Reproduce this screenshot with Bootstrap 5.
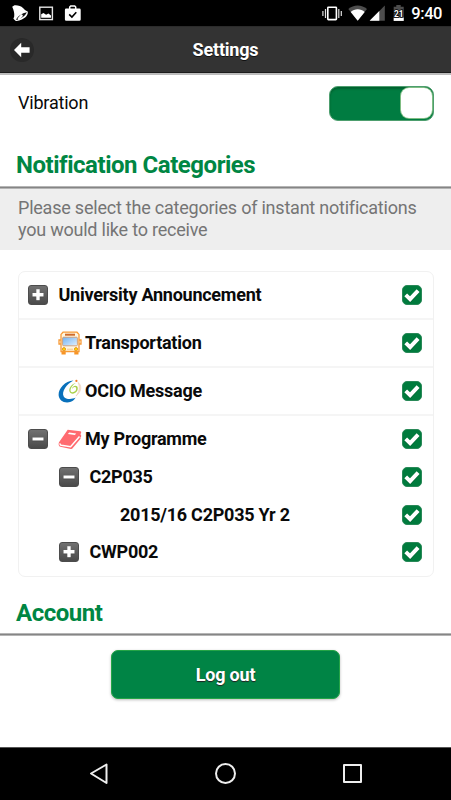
<!DOCTYPE html>
<html lang="en">
<head>
<meta charset="utf-8">
<meta name="viewport" content="width=device-width, initial-scale=1">
<title>Settings</title>
<link rel="stylesheet" href="https://cdn.jsdelivr.net/npm/bootstrap@5.3.0/dist/css/bootstrap.min.css">
<style>
body{font-family:Roboto,sans-serif;width:451px;height:800px;color:#0a0a0a;line-height:1.2}
svg{display:block;flex:none}
.status-bar{height:26px;background:#000;padding:0 9px 0 12px}
.clock{font-size:16.5px;font-weight:500;line-height:26px;margin-left:6px;letter-spacing:-.45px;padding-top:2px}
.app-header{height:49px;background:#333;border-top:1px solid #2b2b2b;border-bottom:2px solid #bcbcbc;box-shadow:inset 0 -1px #1c1c1c;padding-left:10px}
.app-title{font-size:18px;letter-spacing:-.2px;font-weight:700;color:#fff;text-shadow:0 1px 0 #111}
.back-btn{width:24px;height:24px;background:#292929}
.vibration{height:56px;padding:0 17px 0 18px;font-size:18px;letter-spacing:-.2px}
.switch-track{width:105px;height:35px;border-radius:9px;background:#007c41;border:1px solid #4d9e6e;box-shadow:inset 0 2px 2px #00622f;padding:1px}
.knob{width:31px;height:30px;border-radius:8px;background:#fff;box-shadow:0 0 0 1px #7fbd83}
.section-title{font-size:24px;letter-spacing:-.47px;font-weight:700;color:#008643;padding:12px 0 1px 16px;border-bottom:1px solid #b5b5b5;box-shadow:inset 0 -1px #858585,inset 0 -2px #b5b5b5;margin:0}
.section-title span{line-height:44px}
.account-title{padding:14px 0 0 16px}
.hint{height:61px;background:#eee;color:#757575;font-size:18px;letter-spacing:-.22px;line-height:22px;padding:8px 18px}
.categories{margin:21px 17px 0 18px;border:1px solid #f1f1f1;border-radius:7px;font-size:18px;letter-spacing:-.25px;font-weight:700;height:306px}
.main-row{height:48px;padding:0 11px 0 9px}
.line{border-bottom:2px solid #f5f5f5}
.group-row{height:43px;padding-top:3px}
.sub-row{height:37.5px;padding:0 11px 1px 9px}
.toggle-box{width:20px;height:20px;border-radius:3px;background:linear-gradient(#717171,#4a4a4a);border:1px solid #4c4c4c;flex:none}
.check-box{width:20px;height:20px;border-radius:5px;background:#007b3d;border:1px solid #298958;flex:none;position:relative;left:0}
.indent{padding-left:31px}
.indent-icon{padding-left:30px}
.indent-two{padding-left:92px}
.gap-text{margin-left:10.5px}
.gap-icon{margin-left:10px}
.name{margin-left:3px}
.logout{width:229px;height:49px;margin-top:14px;border-radius:7px;border:1px solid #24a446;background:#008445;color:#fff;font-size:18px;letter-spacing:-.2px;font-weight:700;text-shadow:0 1px 1px #222;box-shadow:0 1px 3px #bbb;padding:0}
.system-nav{height:53px;background:#000;border-top:1px solid #555}
</style>
<script src="https://cdn.jsdelivr.net/npm/bootstrap@5.3.0/dist/js/bootstrap.bundle.min.js"></script>
</head>
<body class="d-flex flex-column overflow-hidden bg-white">
<svg width="0" height="0" class="position-absolute">
<defs>
<symbol id="plus" viewBox="0 0 18 18"><path d="M9 4v11M3.5 9.5h11" stroke="#222" stroke-width="3.6" opacity=".35"/><path d="M9 3.3v11M3.5 8.8h11" stroke="#fff" stroke-width="3.4"/></symbol>
<symbol id="minus" viewBox="0 0 18 18"><path d="M3.5 9.5h11" stroke="#222" stroke-width="3.6" opacity=".35"/><path d="M3.5 9h11" stroke="#fff" stroke-width="3"/></symbol>
<symbol id="tick" viewBox="0 0 18 18"><path d="M3 9.8 7.1 14 15.2 5.2" fill="none" stroke="#00552a" stroke-width="4.2" opacity=".6"/><path d="M2.700 8.900 7.100 13.100 15.100 4.700" fill="none" stroke="#fff" stroke-width="4"/></symbol>
</defs>
</svg>

<div class="status-bar d-flex align-items-center text-white flex-shrink-0">
<svg width="72" height="26" viewBox="12 0 72 26">
<path d="M12.200 6.800 14.500 5.200C18 5 21 5.800 23 8c1.300 1.600 2.500 2.600 4.700 3.500.8 3.300-2.400 6.400-5.800 8-2.500 1.200-5.200 1.900-6.400 1.200l-2.100-2 .8-2.200c.4-3.500-.400-6-2-9.700z" fill="#fff"/>
<path d="M16 19.800c1-3.200 6.200-6.700 10.800-7.600-1.200 3.500-7 7.500-10.800 7.600z" fill="#111"/><path d="m18.800 18.800 2.800-3.200" stroke="#fff" stroke-width="2.400" stroke-linecap="round"/>
<rect x="39.800" y="7.200" width="12.600" height="12.400" fill="none" stroke="#e5e5e5" stroke-width="1.400"/><path d="M41.200 17.800v-3.500l2.300-1.300 2.600 1.800 2.300-1.300 2.600 2v2.300z" fill="#fff"/>
<path d="M66.200 8.600h13.200a1.300 1.300 0 0 1 1.300 1.300v9.600a1.300 1.300 0 0 1-1.300 1.300H66.200a1.300 1.300 0 0 1-1.300-1.300V9.900a1.300 1.300 0 0 1 1.300-1.300z" fill="#fff"/><path d="M69.700 9V7l1-1h4l1 1v2" fill="none" stroke="#fff" stroke-width="1.500"/><path d="m69.200 14.400 2.700 2.600 4.400-4.800" fill="none" stroke="#000" stroke-width="1.600"/>
</svg>
<svg class="ms-auto" width="84" height="26" viewBox="321 0 84 26">
<rect x="327.800" y="7.200" width="8.600" height="12.400" rx=".6" fill="none" stroke="#fff" stroke-width="1.600"/><path d="M325.500 9v9M322.900 11v5M338.800 9v9M341.300 11v5" stroke="#ddd" stroke-width="1.200"/>
<path d="M348.300 9C353.500 4.300 361.800 4.300 367 9l-9.300 11.600z" fill="#4d4d4d"/><path d="M350.700 12c3.800-3.700 10.200-3.700 14 0l-7 8.700z" fill="#fff"/>
<path d="M384.800 5.500V20.700h-15z" fill="#4d4d4d"/><path d="M379.300 11v9.700h-9.700z" fill="#fff"/>
<path d="M396.300 5h4.400v1.700h3v14.200h-10V6.700h2.600z" fill="#4d4d4d"/><rect x="393.700" y="17.600" width="10" height="3.300" fill="#fff"/><text x="398.800" y="16.500" text-anchor="middle" font-family="Roboto" font-weight="700" font-size="8.300" fill="#fff" stroke="#000" stroke-width="1.500" paint-order="stroke">21</text>
</svg>
<span class="clock">9:40</span>
</div>

<header class="app-header d-flex align-items-center position-relative flex-shrink-0">
<span class="back-btn rounded-circle d-flex align-items-center justify-content-center"><svg width="18" height="16" viewBox="0 0 18 16"><path d="M1 8 8.200.8v4.400h8.400v5.600H8.200v4.400z" fill="#fff"/></svg></span>
<span class="app-title position-absolute start-0 end-0 text-center">Settings</span>
</header>

<main class="flex-grow-1">
<div class="vibration d-flex align-items-center justify-content-between"><span>Vibration</span><div class="switch-track d-flex align-items-center justify-content-end"><div class="knob"></div></div></div>
<h2 class="section-title"><span class="d-block">Notification Categories</span></h2>
<div class="hint">Please select the categories of instant notifications you would like to receive</div>

<div class="categories">
<div class="main-row line d-flex align-items-center"><span class="toggle-box"><svg width="18" height="18"><use href="#plus"/></svg></span><span class="gap-text">University Announcement</span><span class="check-box ms-auto"><svg width="18" height="18"><use href="#tick"/></svg></span></div>
<div class="main-row line d-flex align-items-center"><div class="indent-icon d-flex align-items-center">
<svg width="24" height="25" viewBox="0 0 24 25"><defs><linearGradient id="sky" x2="1" y2="1"><stop stop-color="#72b2f0"/><stop offset="1" stop-color="#e2f1ff"/></linearGradient></defs><path d="M3.500 19h4.200v4.500H3.500zm12.800 0h4.200v4.500h-4.200z" fill="#f79424"/><path d="M2.900 9H1v4h1.900m18.200-4H23v4h-1.900" fill="#fff" stroke="#f79a36" stroke-width="1.300"/><path d="M5 1.200h14l2 2.200v17.100H3V3.400z" fill="#fff6df" stroke="#f79a36" stroke-width="1.300"/><path d="M7 3.700h10" stroke="#cf6b2b" stroke-width="2"/><rect x="4.600" y="6.200" width="14.800" height="8.600" rx="1" fill="url(#sky)" stroke="#cf8550" stroke-width=".7"/><circle cx="6" cy="18.200" r="1.600" fill="#ffd900" stroke="#e69725"/><circle cx="18" cy="18.200" r="1.600" fill="#ffd900" stroke="#e69725"/><path d="M9 18.200h6" stroke="#f5c48c"/></svg>
<span class="name">Transportation</span></div><span class="check-box ms-auto"><svg width="18" height="18"><use href="#tick"/></svg></span></div>
<div class="main-row line d-flex align-items-center"><div class="indent-icon d-flex align-items-center">
<svg width="24" height="25" viewBox="0 0 24 25"><path d="M15.500 1.500C7 2 .4 9.500.6 16c.3 5.600 6 9 12.300 6.800 2.200-.8 3.900-2.300 4.700-4.200-4 2.200-9.800 2-11.900-1.200C3.200 12.800 8.600 4.800 15.500 1.500z" fill="#0870bb"/><path d="M17.800 4c-4.200.9-7.400 5.500-6.300 8.600 1 2.900 5.300 2.700 7.400-.3 1.600-2.500 1-5.600-1.400-5.600-1.900 0-3.300 1.600-3.500 3.200 1-1.600 2.200-2.300 3.300-1.900 1.300.5 1.200 2.800 0 4.100-1.300 1.400-4 1.500-4.600.1C11.800 9.700 14.800 5.600 17.800 4z" fill="#a9d04a"/><path d="M20 3.500c4 2.500 4 8.800-2 13.500 3-4 4.500-9 2-13.500z" fill="#f4dfcd" stroke="#ecd4c0" stroke-width=".7"/><circle cx="18.400" cy="1.900" r="1.100" fill="#f17725"/></svg>
<span class="name">OCIO Message</span></div><span class="check-box ms-auto"><svg width="18" height="18"><use href="#tick"/></svg></span></div>
<div class="main-row group-row d-flex align-items-center"><span class="toggle-box"><svg width="18" height="18"><use href="#minus"/></svg></span><div class="gap-icon d-flex align-items-center">
<svg width="24" height="25" viewBox="0 0 24 25"><path d="m9.700 2.800 12.600 1.400c1 .2 1.200 1 .6 2l-.5 1.400.7.400v1.800l-.7.800.2 1.200-7.800 9.300c-.5.700-1 .9-2 .8L2.300 19.700C.8 19.300.1 17.200 1 15.200z" fill="#ff6b70"/><path d="M2.300 16.300c-.5.900 0 1.700 1.100 2l9.200 1.500 8.900-10.300" stroke="#fff" stroke-width="1.500" fill="none"/><path d="M11.200 5.500l7 .9-1.300 1.500-7-.9z" fill="#fff"/></svg>
<span class="name">My Programme</span></div><span class="check-box ms-auto"><svg width="18" height="18"><use href="#tick"/></svg></span></div>
<div class="sub-row d-flex align-items-center"><div class="indent d-flex align-items-center"><span class="toggle-box"><svg width="18" height="18"><use href="#minus"/></svg></span><span class="gap-text">C2P035</span></div><span class="check-box ms-auto"><svg width="18" height="18"><use href="#tick"/></svg></span></div>
<div class="sub-row d-flex align-items-center"><span class="indent-two">2015/16 C2P035 Yr 2</span><span class="check-box ms-auto"><svg width="18" height="18"><use href="#tick"/></svg></span></div>
<div class="sub-row d-flex align-items-center"><div class="indent d-flex align-items-center"><span class="toggle-box"><svg width="18" height="18"><use href="#plus"/></svg></span><span class="gap-text">CWP002</span></div><span class="check-box ms-auto"><svg width="18" height="18"><use href="#tick"/></svg></span></div>
</div>

<h2 class="section-title account-title"><span class="d-block">Account</span></h2>
<button class="logout btn d-block mx-auto">Log out</button>
</main>

<nav class="system-nav flex-shrink-0" aria-label="System navigation"><svg width="451" height="52" viewBox="0 748 451 52" fill="none" stroke="#eee" stroke-width="2" stroke-linejoin="round"><path d="M106.500 764.500v18.500L91 773.500z"/><circle cx="225.500" cy="773.500" r="9.500"/><rect x="344" y="765" width="17" height="17"/></svg></nav>
</body>
</html>
